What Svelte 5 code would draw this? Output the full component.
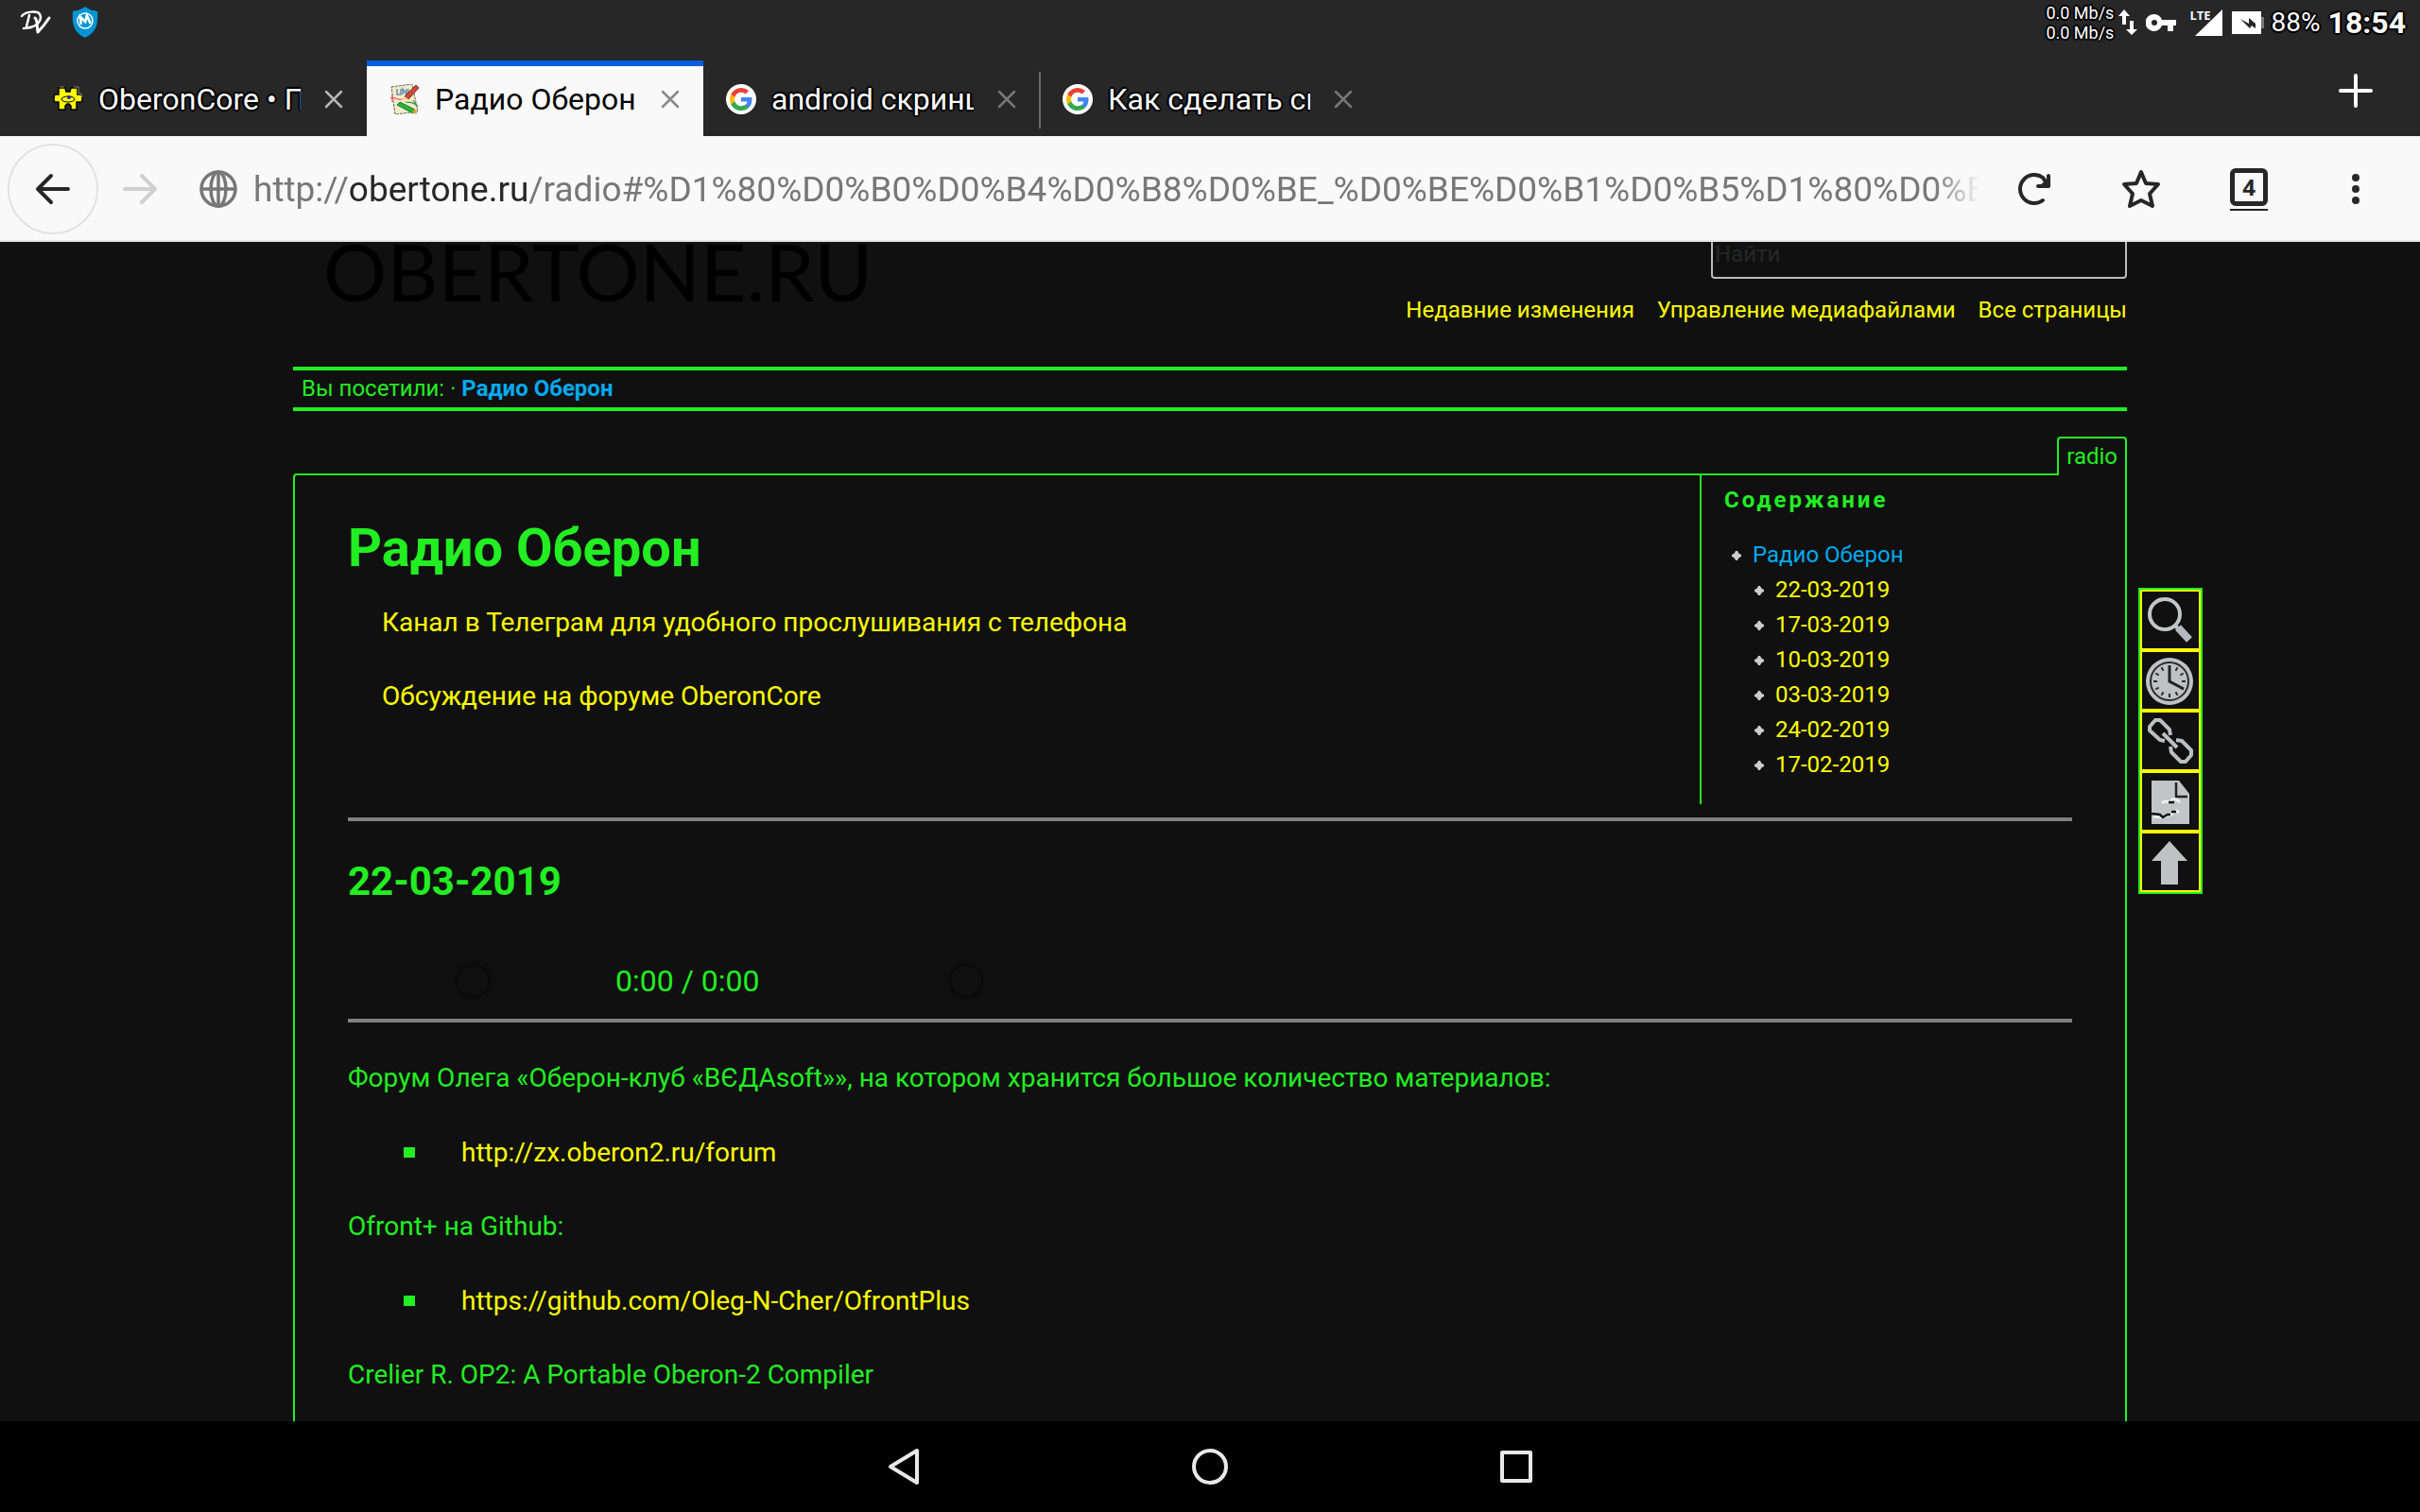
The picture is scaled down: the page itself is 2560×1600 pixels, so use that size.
<script>
	const tabs = [
		{ title: "OberonCore • Портал", icon: "puzzle" },
		{ title: "Радио Оберон", icon: "pencils", active: true },
		{ title: "android скриншот", icon: "google" },
		{ title: "Как сделать скриншот", icon: "google", divider: true },
	];

	const siteLinks = ["Недавние изменения", "Управление медиафайлами", "Все страницы"];

	const dates = [
		"22-03-2019",
		"17-03-2019",
		"10-03-2019",
		"03-03-2019",
		"24-02-2019",
		"17-02-2019",
	];

	const ticks = [30, 60, 90, 120, 150, 180, 210, 240, 270, 300, 330];

	let query = "";
	let progress = 0;
	let volume = 100;
</script>

<style>
	:global(body) {
		background: #000;
		font-family: Roboto, "Liberation Sans", sans-serif;
	}
	* {
		box-sizing: border-box;
	}
	a {
		color: #ff0;
		text-decoration: none;
	}
	button {
		display: flex;
		align-items: center;
		justify-content: center;
		padding: 0;
		border: none;
		background: none;
		color: inherit;
		font-family: inherit;
	}
	svg {
		display: block;
		flex: none;
	}
	ul {
		margin: 0;
		padding: 0;
		list-style: none;
	}
	.screen {
		display: flex;
		flex-direction: column;
		height: 100vh;
		overflow: hidden;
	}

	.status {
		display: flex;
		justify-content: space-between;
		height: 48px;
		padding: 0 15px 0 20px;
		background: #272727;
		color: #fff;
	}
	.status div {
		display: flex;
		align-items: center;
	}
	.status .notices {
		gap: 20px;
	}
	.outlined {
		text-shadow: 2px 0 1px #000, -2px 0 1px #000, 0 2px 1px #000, 0 -2px 1px #000,
			1px 1px 1px #000, -1px -1px 1px #000, 1px -1px 1px #000, -1px 1px 1px #000;
	}
	.speed {
		margin-right: 4px;
		font-size: 18px;
		line-height: 21px;
	}
	.key {
		margin: 0 12px 0 8px;
	}
	.lte {
		margin-right: 2px;
		align-self: flex-start;
		padding-top: 8px;
		font: 700 13px/16px "Open Sans", sans-serif;
	}
	.signal {
		margin: 0 8px 0 -26px;
	}
	.percent {
		margin-left: 8px;
		font-size: 28px;
		line-height: 52px;
	}
	.clock {
		margin-left: 8px;
		font-size: 32px;
		font-weight: 700;
		line-height: 52px;
	}

	.tabs {
		display: flex;
		align-items: flex-end;
		height: 96px;
		padding: 0 12px 0 32px;
		background: #272727;
		color: #fff;
	}
	.tab {
		position: relative;
		display: flex;
		align-items: center;
		width: 356px;
		height: 80px;
		padding: 2px 25px 0 24px;
		color: #777;
	}
	.tab:first-child {
		color: #b5b5b5;
	}
	.tab.divider::before {
		content: "";
		position: absolute;
		left: -1px;
		top: 12px;
		width: 2px;
		height: 60px;
		background: #6a6a6a;
	}
	.tab span {
		flex: 1;
		margin: 0 25px 0 16px;
		overflow: hidden;
		white-space: nowrap;
		color: #fff;
		font-size: 32px;
		line-height: 48px;
	}
	.tab.active {
		background: #f9f9f9;
		box-shadow: inset 0 6px #0060df;
		color: #8a8a8a;
	}
	.tab.active span {
		color: #000;
		text-shadow: 0 0 3px #fff;
	}
	.new-tab {
		width: 112px;
		height: 96px;
		margin-left: auto;
	}

	.toolbar {
		display: flex;
		align-items: center;
		height: 112px;
		padding: 2px 12px 0 8px;
		border-bottom: 2px solid #e5e5e5;
		background: #f9f9f9;
		color: #272727;
	}
	.back {
		width: 96px;
		height: 96px;
		border: 2px solid #e2e2e2;
		border-radius: 50%;
	}
	.forward {
		width: 88px;
		height: 96px;
		color: #d0d0d0;
	}
	.url {
		flex: 1;
		justify-content: flex-start;
		gap: 16px;
		min-width: 0;
		margin-left: 18px;
		color: #777;
		font-size: 37px;
	}
	.url span {
		flex: 1;
		padding-top: 2px;
		overflow: hidden;
		text-align: left;
		white-space: nowrap;
		line-height: 56px;
		-webkit-mask-image: linear-gradient(to left, transparent, #000 48px);
		mask-image: linear-gradient(to left, transparent, #000 48px);
	}
	.url b {
		color: #272727;
		font-weight: 400;
	}
	.tool {
		width: 114px;
		height: 96px;
	}
	.tool:last-child {
		width: 112px;
	}
	.count {
		padding-bottom: 3px;
		border-bottom: 2px solid #272727;
	}
	.count span {
		display: block;
		width: 40px;
		height: 40px;
		border: 5px solid #272727;
		border-radius: 6px;
		font: 700 24px/30px "Open Sans", sans-serif;
		text-align: center;
	}

	main {
		flex: 1;
		min-height: 0;
		padding: 0 310px;
		overflow: hidden;
		background: #101010;
		color: #2e2;
		font-size: 28px;
		line-height: 39px;
	}
	header {
		display: flex;
		justify-content: space-between;
		align-items: flex-start;
		margin-top: -21px;
	}
	.logo {
		padding-left: 32px;
		color: #000;
		font-family: Lato, sans-serif;
		font-size: 84px;
		line-height: 104px;
	}
	.site-tools {
		display: flex;
		flex-direction: column;
		align-items: flex-end;
		gap: 16px;
		padding-top: 8px;
		font-size: 24px;
		line-height: 34px;
	}
	.site-tools input {
		width: 440px;
		height: 52px;
		padding: 0 2px;
		border: 2px solid #bbb;
		border-radius: 4px;
		background: transparent;
		color: #2e2;
		font: inherit;
	}
	.site-tools input::placeholder {
		color: #24272a;
		opacity: 1;
	}
	.site-tools ul {
		display: flex;
		gap: 24px;
	}
	.trace {
		margin-top: 43px;
		padding-left: 9px;
		border: solid #2e2;
		border-width: 4px 0;
		font-size: 24px;
	}
	.trace a,
	.toc .current {
		color: #0ae;
	}
	.page {
		position: relative;
		margin-top: 27px;
	}
	.page-id {
		display: flex;
		justify-content: flex-end;
		margin-bottom: -2px;
		font-size: 24px;
	}
	.page-id span {
		position: relative;
		padding: 0 8px;
		border: 2px solid #2e2;
		border-bottom: none;
		border-radius: 4px 4px 0 0;
		background: #101010;
	}
	article {
		padding: 0 56px 80px;
		border: 2px solid #2e2;
		border-radius: 4px 0 0 0;
	}
	.intro {
		display: flex;
		justify-content: space-between;
		margin-right: -56px;
	}
	h1 {
		margin: 49px 0 31px;
		font-size: 56px;
		line-height: 56px;
	}
	h2 {
		margin: 43px 0 44px;
		font-size: 42px;
		line-height: 42px;
	}
	h3 {
		margin: 0 0 22px;
		font-size: 24px;
		line-height: 36px;
		letter-spacing: 3px;
	}
	p {
		margin: 0 0 40px;
	}
	.intro p {
		margin-bottom: 39px;
		padding-left: 36px;
	}
	hr {
		height: 4px;
		margin: 14px 0 0;
		border: none;
		background: #808080;
	}
	.toc {
		width: 450px;
		padding: 8px 24px 23px;
		border-left: 2px solid #2e2;
		font-size: 24px;
		line-height: 37px;
	}
	.toc li {
		display: flex;
		align-items: center;
		gap: 12px;
		padding-left: 32px;
	}
	.toc li.top {
		padding-left: 8px;
	}
	.player {
		display: flex;
		align-items: center;
		height: 80px;
		padding-left: 116px;
		font-size: 32px;
	}
	.player input {
		-webkit-appearance: none;
		appearance: none;
		width: 140px;
		height: 32px;
		margin: 0;
		background: transparent;
	}
	.player input::-webkit-slider-thumb {
		-webkit-appearance: none;
		width: 32px;
		height: 32px;
		border-radius: 50%;
		background: #101010;
		box-shadow: 0 0 6px #000;
	}
	.player span {
		margin: 0 95px 0 27px;
	}
	.player + hr {
		margin: 0 0 39px;
	}
	.links {
		margin-bottom: 39px;
	}
	.links li {
		display: flex;
		align-items: center;
		padding-left: 59px;
	}
	.links li::before {
		content: "";
		width: 12px;
		height: 11px;
		margin-right: 49px;
		background: #2e2;
	}
	.page-tools {
		position: absolute;
		top: 160px;
		right: -80px;
		border: 2px solid #2e2;
	}
	.page-tools a {
		display: block;
		border: 2px solid #ff0;
	}

	.system {
		display: flex;
		align-items: center;
		justify-content: center;
		gap: 244px;
		height: 96px;
		background: #000;
		color: #e8e8e8;
	}
	.system button {
		width: 80px;
		height: 96px;
	}
</style>

<div class="screen">
	<div class="status">
		<div class="notices">
			<svg width="36" height="28" viewBox="0 0 36 28" fill="none" stroke="#fff" stroke-linecap="round" stroke-linejoin="round">
				<path d="M3 7C7 2 20 1 22 5c3 5-2 13-11 14" stroke-width="2.5" />
				<path d="M11 6 8 18M5 20l8-1" stroke-width="2.5" />
				<path d="M17 9c3 2 2 10 3 15 4-4 8-9 12-15" stroke-width="3" />
			</svg>
			<svg width="28" height="36" viewBox="0 0 28 36">
				<path d="M14 1c5 4 9 4 13 5 1 14-1 22-13 28C2 28 0 20 1 6c4-1 8-1 13-5Z" fill="#0095d5" />
				<circle cx="14" cy="16" r="8" fill="none" stroke="#fff" stroke-width="1.5" />
				<path d="m9 19 1-8 4 6 3-6 2 9" transform="rotate(-12 14 16)" fill="none" stroke="#fff" stroke-width="2.6" />
			</svg>
		</div>
		<div>
			<span class="speed outlined">0.0 Mb/s<br />0.0 Mb/s</span>
			<svg width="22" height="30" viewBox="0 0 22 30" fill="#fff">
				<path d="M7 1 1 8h4v9h4V8h4ZM15 28l6-6h-4v-9h-4v9H9Z" />
			</svg>
			<svg class="key" width="34" height="20" viewBox="0 0 34 20">
				<path d="M9 1a9 9 0 1 0 8 12h6v6h6v-6h3V7H17A9 9 0 0 0 9 1Zm0 6a3 3 0 1 1 0 6 3 3 0 0 1 0-6Z" fill="#fff" />
			</svg>
			<span class="lte">LTE</span>
			<svg class="signal" width="38" height="30" viewBox="0 0 38 30" fill="#fff">
				<path d="M36 1v28H7Z" />
			</svg>
			<svg width="34" height="26" viewBox="0 0 34 26">
				<path d="M31 7h3v12h-3Z" fill="#777" />
				<path d="M0 1h31v24H0Z" fill="#fff" />
				<path d="m9 9 9 5V8l7 6v5l-4-3-2 3Z" fill="#272727" />
			</svg>
			<span class="percent outlined">88%</span>
			<span class="clock outlined">18:54</span>
		</div>
	</div>

	<div class="tabs">
		{#each tabs as tab}
			<div class="tab" class:active={tab.active} class:divider={tab.divider}>
				{#if tab.icon === "puzzle"}
					<svg width="32" height="32" viewBox="0 0 32 32">
						<path d="M6 4h7l1 4h4l1-4h7v7h4l1 3v3l-1 2h-5v8h-6v-4l-2-2h-2l-2 2v4H6v-8H2l-1-2v-3l1-3h4Z" fill="#ff0" stroke="#000" stroke-width="1.5" />
						<path d="M7 3h5M22 3h5v7h3l1 4" fill="none" stroke="#888" />
						<ellipse cx="16" cy="16" rx="7" ry="3" fill="#ff0" stroke="#000" />
						<circle cx="17" cy="14" r="2" fill="#22c" />
					</svg>
				{:else if tab.icon === "pencils"}
					<svg width="32" height="32" viewBox="0 0 32 32">
						<path d="m2 3 22-3 6 29-24 3Z" fill="#f2ecca" stroke="#665" stroke-width="1" stroke-dasharray="3 1" />
						<path d="M8 5v6h4V5m2 6V5l4 6V5m2 0v5" fill="none" stroke="#6a8fb5" stroke-width="1.5" />
						<path d="M1 15c4-3 6 3 13 1m-11 3v-8" fill="none" stroke="#f0505a" stroke-width="1.2" />
						<path d="M17 19c5 1 8-1 13 5M25 17l5 7" fill="none" stroke="#3a9a4a" stroke-width="1.2" />
						<path d="m16 13 12-12 3 3-11 12Z" fill="#cf4934" stroke="#732" />
						<path d="m12 17 4-4 4 3Z" fill="#fc9" />
						<path d="m8 22 3-3 16 8-2 4Z" fill="#2bb52b" stroke="#174" />
						<path d="m24 30 5 2-2-6Z" fill="#e8a040" />
					</svg>
				{:else}
					<svg width="32" height="32" viewBox="0 0 32 32">
						<circle cx="16" cy="16" r="16" fill="#fff" />
						<g transform="translate(4 4)">
							<path d="M23.5 12.3c0-.8-.1-1.6-.2-2.3H12v4.5h6.5a5.5 5.5 0 0 1-2.4 3.6v3h3.9c2.3-2.1 3.5-5.2 3.5-8.8Z" fill="#4285f4" />
							<path d="M12 24c3.2 0 6-1.1 8-2.9l-3.9-3c-1.1.7-2.5 1.2-4.1 1.2-3.1 0-5.8-2.1-6.7-5H1.3v3.1A12 12 0 0 0 12 24Z" fill="#34a853" />
							<path d="M5.3 14.3a7.2 7.2 0 0 1 0-4.6V6.6h-4a12 12 0 0 0 0 10.8Z" fill="#fbbc05" />
							<path d="M12 4.8c1.8 0 3.3.6 4.6 1.8L20 3.2A12 12 0 0 0 1.3 6.6l4 3.1c.9-2.9 3.6-4.9 6.7-4.9Z" fill="#ea4335" />
						</g>
					</svg>
				{/if}
				<span class:outlined={!tab.active}>{tab.title}</span>
				<button aria-label="Закрыть вкладку">
					<svg width="20" height="20" viewBox="0 0 20 20" stroke="currentColor" stroke-width="2.5" stroke-linecap="round">
						<path d="m2 2 16 16M18 2 2 18" />
					</svg>
				</button>
			</div>
		{/each}
		<button class="new-tab" aria-label="Новая вкладка">
			<svg width="36" height="36" viewBox="0 0 36 36" stroke="#fff" stroke-width="4" stroke-linecap="round">
				<path d="M18 2v32M2 18h32" />
			</svg>
		</button>
	</div>

	<div class="toolbar">
		<button class="back" aria-label="Назад">
			<svg width="40" height="36" viewBox="0 0 40 36" fill="none" stroke="currentColor" stroke-width="4" stroke-linecap="round" stroke-linejoin="round">
				<path d="M36 18H4M18 4 4 18l14 14" />
			</svg>
		</button>
		<button class="forward" aria-label="Вперёд">
			<svg width="40" height="36" viewBox="0 0 40 36" fill="none" stroke="currentColor" stroke-width="4" stroke-linecap="round" stroke-linejoin="round">
				<path d="M4 18h32M22 4l14 14-14 14" />
			</svg>
		</button>
		<button class="url">
			<svg width="42" height="42" viewBox="0 0 42 42" fill="none" stroke="currentColor" stroke-width="3.5">
				<circle cx="21" cy="21" r="18" />
				<ellipse cx="21" cy="21" rx="8" ry="18" />
				<path d="M3 21h36M21 3v36" />
			</svg>
			<span>http://<b>obertone.ru</b>/radio#%D1%80%D0%B0%D0%B4%D0%B8%D0%BE_%D0%BE%D0%B1%D0%B5%D1%80%D0%BE%D0%BD</span>
		</button>
		<button class="tool" aria-label="Обновить">
			<svg width="38" height="38" viewBox="0 0 38 38" fill="none" stroke="currentColor" stroke-width="4" stroke-linecap="round" stroke-linejoin="round">
				<path d="M29 31a15 15 0 1 1 0-24l5 7" />
				<path d="M35 5v11H24" />
				<path d="M34 8v7h-8Z" fill="currentColor" stroke="none" />
			</svg>
		</button>
		<button class="tool" aria-label="Добавить в закладки">
			<svg width="42" height="42" viewBox="0 0 42 42" fill="none" stroke="currentColor" stroke-width="4" stroke-linejoin="round">
				<path d="m21 3 5 12 13 1-9 10 3 13-12-6-12 6 3-13-9-10 13-1Z" />
			</svg>
		</button>
		<button class="tool" aria-label="Вкладки"><div class="count"><span>4</span></div></button>
		<button class="tool" aria-label="Меню">
			<svg width="10" height="34" viewBox="0 0 10 34" fill="currentColor">
				<circle cx="5" cy="5" r="4" />
				<circle cx="5" cy="17" r="4" />
				<circle cx="5" cy="29" r="4" />
			</svg>
		</button>
	</div>

	<main>
		<header>
			<div class="logo">OBERTONE.RU</div>
			<div class="site-tools">
				<input type="search" placeholder="Найти" aria-label="Найти" bind:value={query} />
				<ul>
					{#each siteLinks as link}
						<li><a href="#top">{link}</a></li>
					{/each}
				</ul>
			</div>
		</header>

		<div class="trace">Вы посетили: · <a href="#radio"><strong>Радио Оберон</strong></a></div>

		<div class="page">
			<div class="page-id"><span>radio</span></div>
			<article>
				<div class="intro">
					<div>
						<h1 id="radio">Радио Оберон</h1>
						<p><a href="#telegram">Канал в Телеграм для удобного прослушивания с телефона</a></p>
						<p><a href="#forum">Обсуждение на форуме OberonCore</a></p>
					</div>
					<nav class="toc">
						<h3>Содержание</h3>
						<ul>
							<li class="top">
								<svg width="10" height="10" viewBox="0 0 10 10" fill="#ccc"><path d="M4 0h2l1 2 1 1 2 1v2L8 7 7 8 6 10H4L3 8 2 7 0 6V4l2-1 1-1Z" /></svg>
								<a class="current" href="#radio">Радио Оберон</a>
							</li>
							{#each dates as date}
								<li>
									<svg width="10" height="10" viewBox="0 0 10 10" fill="#ccc"><path d="M4 0h2l1 2 1 1 2 1v2L8 7 7 8 6 10H4L3 8 2 7 0 6V4l2-1 1-1Z" /></svg>
									<a href="#{date}">{date}</a>
								</li>
							{/each}
						</ul>
					</nav>
				</div>
				<hr />
				<h2 id="22-03-2019">22-03-2019</h2>
				<div class="player">
					<input type="range" aria-label="Позиция" bind:value={progress} />
					<span>0:00 / 0:00</span>
					<input type="range" aria-label="Громкость" bind:value={volume} />
				</div>
				<hr />
				<p>Форум Олега «Оберон-клуб «ВЄДАsoft»», на котором хранится большое количество материалов:</p>
				<ul class="links">
					<li><a href="http://zx.oberon2.ru/forum">http://zx.oberon2.ru/forum</a></li>
				</ul>
				<p>Ofront+ на Github:</p>
				<ul class="links">
					<li><a href="https://github.com/Oleg-N-Cher/OfrontPlus">https://github.com/Oleg-N-Cher/OfrontPlus</a></li>
				</ul>
				<p>Crelier R. OP2: A Portable Oberon-2 Compiler</p>
			</article>

			<div class="page-tools">
				<a href="#source" aria-label="Показать исходный текст">
					<svg width="60" height="60" viewBox="0 0 60 60" fill="none" stroke="#c4c5c9">
						<circle cx="24" cy="24" r="16" stroke-width="4" />
						<path d="m35 36 5 5" stroke-width="4" />
						<path d="m38 38 12 13" stroke="#b5b8be" stroke-width="8" />
					</svg>
				</a>
				<a href="#revisions" aria-label="История страницы">
					<svg width="60" height="60" viewBox="0 0 60 60">
						<circle cx="29" cy="31" r="25" fill="#bfc1c5" />
						<circle cx="29" cy="31" r="20" fill="none" stroke="#2a2a2c" stroke-width="2" />
						{#each ticks as angle}
							<path d="M29 14v4" transform="rotate({angle} 29 31)" stroke="#2a2a2c" stroke-width="2" />
						{/each}
						<path d="M29 14v17l15 8" fill="none" stroke="#222" stroke-width="3" />
					</svg>
				</a>
				<a href="#backlinks" aria-label="Ссылки сюда">
					<svg width="60" height="60" viewBox="0 0 60 60" fill="none" stroke="#bcbec3" stroke-width="4" stroke-linejoin="round">
						<path d="m24 30-5-1L8 19v-4l6-7h5l10 10 1 6" />
						<path d="m30 36 1 6 10 10h5l6-7v-5L42 30l-6-1" />
						<path d="m22 22 15 15" />
					</svg>
				</a>
				<a href="#rename" aria-label="Переименовать страницу">
					<svg width="60" height="60" viewBox="0 0 60 60">
						<path d="M10 8h29l11 14v32H10Z" fill="#c2c4c8" />
						<path d="M36 10v15h12" fill="none" stroke="#222" stroke-width="2.5" />
						<path d="M21 32c4-4 8 0 10-3s6-1 9 2M12 46l9 1 10-3 5-4 3 2" fill="none" stroke="#eee" stroke-width="3" />
						<path d="M28 31h6M10 43l9 1 3 3 3-2 2-1h3m1-3h5" fill="none" stroke="#111" stroke-width="2.5" />
					</svg>
				</a>
				<a href="#top" aria-label="Наверх">
					<svg width="60" height="60" viewBox="0 0 60 60">
						<path d="m29 8 19 21H38v25H20V29H10Z" fill="#bfc1c5" />
					</svg>
				</a>
			</div>
		</div>
	</main>

	<nav class="system">
		<button aria-label="Назад">
			<svg width="40" height="40" viewBox="0 0 40 40" fill="none" stroke="currentColor" stroke-width="4" stroke-linejoin="round">
				<path d="M34 3v34L6 20Z" />
			</svg>
		</button>
		<button aria-label="Домой">
			<svg width="40" height="40" viewBox="0 0 40 40" fill="none" stroke="currentColor" stroke-width="4">
				<circle cx="20" cy="20" r="17" />
			</svg>
		</button>
		<button aria-label="Недавние">
			<svg width="40" height="40" viewBox="0 0 40 40" fill="none" stroke="currentColor" stroke-width="4" stroke-linejoin="round">
				<path d="M5 5h30v30H5Z" />
			</svg>
		</button>
	</nav>
</div>
